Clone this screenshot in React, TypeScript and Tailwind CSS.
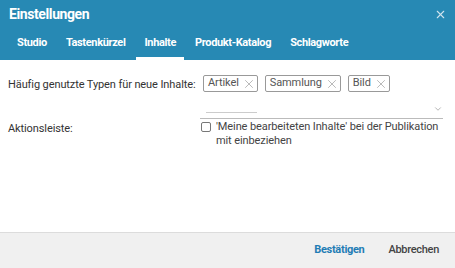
import { X, ChevronDown } from "lucide-react";

const tabs = ["Studio", "Tastenkürzel", "Inhalte", "Produkt-Katalog", "Schlagworte"];
const chips = ["Artikel", "Sammlung", "Bild"];

export default function App() {
  return (
    <div
      className="w-[455px] h-[268px] bg-white flex flex-col overflow-hidden"
      style={{ fontFamily: "Roboto, 'Liberation Sans', sans-serif" }}
    >
      {/* Header */}
      <div className="bg-[#2789b4] h-[60px] flex flex-col shrink-0">
        <div className="flex items-center justify-between h-[29px] pl-[9px] pr-[8px]">
          <h1 className="text-[14px] font-bold text-white tracking-[-0.4px]">Einstellungen</h1>
          <X size={13} strokeWidth={2} className="text-[#cfe3ee]" />
        </div>
        <div className="flex items-stretch gap-[3px] pl-[9px] mt-auto h-[31px]">
          {tabs.map((t) => (
            <div
              key={t}
              className={`px-2 flex items-center text-[11px] font-bold text-white tracking-[-0.35px] border-b-[3px] pt-[1px] ${
                t === "Inhalte" ? "border-white" : "border-transparent"
              }`}
            >
              {t}
            </div>
          ))}
        </div>
      </div>

      {/* Body */}
      <div className="flex-1 pt-[15px] text-[11px] text-[#333] tracking-[-0.1px]">
        <div className="flex">
          <div className="w-[200px] pl-2 pt-[3px] leading-[13px]">Häufig genutzte Typen für neue Inhalte:</div>
          <div className="flex-1 pr-[12px]">
            <div className="flex gap-[7px] pl-[3px]">
              {chips.map((c) => (
                <div
                  key={c}
                  className="h-[17px] flex items-center gap-[3px] border border-[#999] rounded-[2px] pl-[4px] pr-[1px] text-[#555]"
                >
                  {c}
                  <X size={14} strokeWidth={1} className="text-[#888]" />
                </div>
              ))}
            </div>
            <div className="relative h-[27px] border-b border-[#bbb]">
              <div className="absolute left-[6px] w-[51px] bottom-[5px] border-b border-[#ccc]" />
              <ChevronDown size={10} strokeWidth={1.5} className="absolute right-0 top-[12px] text-[#888]" />
            </div>
          </div>
        </div>
        <div className="flex mt-[1px]">
          <div className="w-[200px] pl-2 pt-[1px]">Aktionsleiste:</div>
          <div className="flex-1 flex items-start gap-[5px] pl-[1px]">
            <div className="w-[10px] h-[10px] border border-[#777] rounded-[2px] mt-[2px] shrink-0" />
            <div className="leading-[14px] text-[#444]">
              'Meine bearbeiteten Inhalte' bei der Publikation
              <br />
              mit einbeziehen
            </div>
          </div>
        </div>
      </div>

      {/* Footer */}
      <div className="h-[36px] bg-[#f0f0f0] border-t border-[#dcdcdc] flex items-center justify-end gap-[24px] pr-[16px] shrink-0 text-[11px]">
        <button className="text-[#1f7db5] font-bold tracking-[-0.3px]">Bestätigen</button>
        <button className="text-[#444] font-medium tracking-[-0.3px]">Abbrechen</button>
      </div>
    </div>
  );
}
